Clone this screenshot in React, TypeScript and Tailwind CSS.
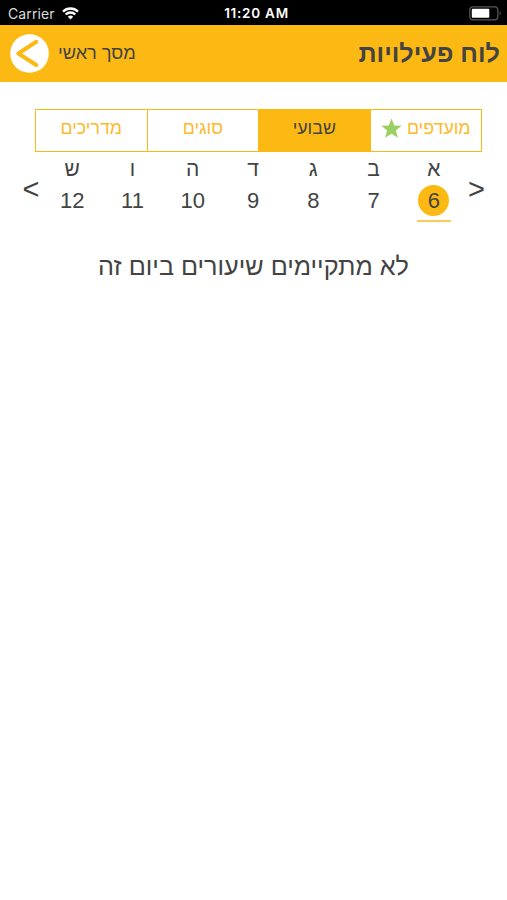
// Weekly activity board - mobile screen, right to left

import { useState } from 'react'

interface Day {
  letter: string
  date: number
}

const days: Day[] = [
  { letter: 'א', date: 6 },
  { letter: 'ב', date: 7 },
  { letter: 'ג', date: 8 },
  { letter: 'ד', date: 9 },
  { letter: 'ה', date: 10 },
  { letter: 'ו', date: 11 },
  { letter: 'ש', date: 12 },
]

const tabs = ['מועדפים', 'שבועי', 'סוגים', 'מדריכים']

function StatusBar() {
  return (
    <div
      dir="ltr"
      className="grid h-[25px] grid-cols-3 items-center bg-black pt-[2px] pl-2 pr-[5px] font-['Inter',sans-serif] text-[14px] text-white"
    >
      <div className="flex items-center gap-[7px]">
        <span className="tracking-[0.1px] text-[#dcdcdc]">Carrier</span>
        <svg width="17" height="13" viewBox="0 0 17 13" fill="none" stroke="white" strokeWidth="2.3">
          <path d="M1 4.6a10.6 10.6 0 0 1 15 0" />
          <path d="M3.7 7.5a6.8 6.8 0 0 1 9.6 0" />
          <path d="M8.5 12.6 5.8 9.8a3.8 3.8 0 0 1 5.4 0Z" fill="white" stroke="none" />
        </svg>
      </div>
      <span className="pl-[3px] text-center text-[13.5px] font-semibold tracking-[0.75px]">11:20 AM</span>
      <div className="flex justify-end">
        <svg width="33" height="15" viewBox="0 0 33 15">
          <rect x="0.8" y="0.8" width="28" height="13" rx="3" fill="none" stroke="#55555a" strokeWidth="1.3" />
          <rect x="2.8" y="2.8" width="17.5" height="9" rx="1" fill="white" />
          <path d="M30.6 5v4.6c1.6-.7 1.6-3.9 0-4.6Z" fill="#55555a" />
        </svg>
      </div>
    </div>
  )
}

function Header() {
  return (
    <header className="flex h-[57px] items-center justify-between bg-[#fdb913] pr-[7px] pl-[10px]">
      <h1 className="text-[25.2px] leading-none font-bold">לוח פעילויות</h1>
      <button className="flex items-center gap-[9px]">
        <span className="pb-px text-[18.2px] leading-[18px]">מסך ראשי</span>
        <svg width="39" height="39" viewBox="0 0 39 39">
          <circle cx="19.5" cy="19.5" r="19.3" fill="white" />
          <path
            d="M26.3 7.8 8.3 19.5 26.3 31"
            fill="none"
            stroke="#fdb913"
            strokeWidth="4"
            strokeLinecap="round"
            strokeLinejoin="round"
          />
        </svg>
      </button>
    </header>
  )
}

function Star() {
  return (
    <svg width="21" height="21" viewBox="0 0 22 22" fill="#9bcf63">
      <path d="M11 .5 13.9 7.8 21.6 8.2 15.6 13 17.7 20.8 11 16.5 4.3 20.8 6.4 13 .4 8.2 8.1 7.8Z" />
    </svg>
  )
}

export default function App() {
  const [activeTab, setActiveTab] = useState(1)
  const [selected, setSelected] = useState(6)

  return (
    <div dir="rtl" className="h-[900px] w-[507px] bg-white font-['Liberation_Sans',sans-serif] text-[#434343]">
      <StatusBar />
      <Header />

      {/* Tabs, the 1px gaps show the border colour */}
      <div className="mr-[25px] ml-[35px] mt-[27px] flex h-[43px] gap-px bg-[#fdb913] p-px">
        {tabs.map((tab, i) => (
          <button
            key={tab}
            onClick={() => setActiveTab(i)}
            className={`flex flex-1 items-center justify-center gap-[5px] pb-[5px] text-[17.8px] leading-[18px] ${
              activeTab === i ? 'bg-[#fdb913] text-[#434343]' : 'bg-white text-[#fdb92c]'
            }`}
          >
            <span className="pb-px">{tab}</span>
            {i === 0 && <Star />}
          </button>
        ))}
      </div>

      {/* Week days */}
      <div className="mt-[6px] flex h-[64px] pr-[18px] pl-[20px]">
        <button dir="ltr" className="w-[25px] pb-px text-center text-[29px] leading-none">
          &gt;
        </button>
        <div className="flex flex-1">
          {days.map((day) => (
            <button key={day.date} onClick={() => setSelected(day.date)} className="flex flex-1 flex-col items-center">
              <span className="h-[27px] text-[21px] leading-[22px]">{day.letter}</span>
              <span
                className={`flex size-[31px] items-center justify-center rounded-full text-[22px] ${
                  selected === day.date ? 'bg-[#fdb913]' : ''
                }`}
              >
                {day.date}
              </span>
              {selected === day.date && <span className="mt-[4px] h-[2px] w-[34px] bg-[#fdc95a]" />}
            </button>
          ))}
        </div>
        <button dir="ltr" className="w-[22px] pb-px text-center text-[29px] leading-none">
          &lt;
        </button>
      </div>

      <p className="mt-[26px] text-center text-[25.2px] leading-[36px]">לא מתקיימים שיעורים ביום זה</p>
    </div>
  )
}
